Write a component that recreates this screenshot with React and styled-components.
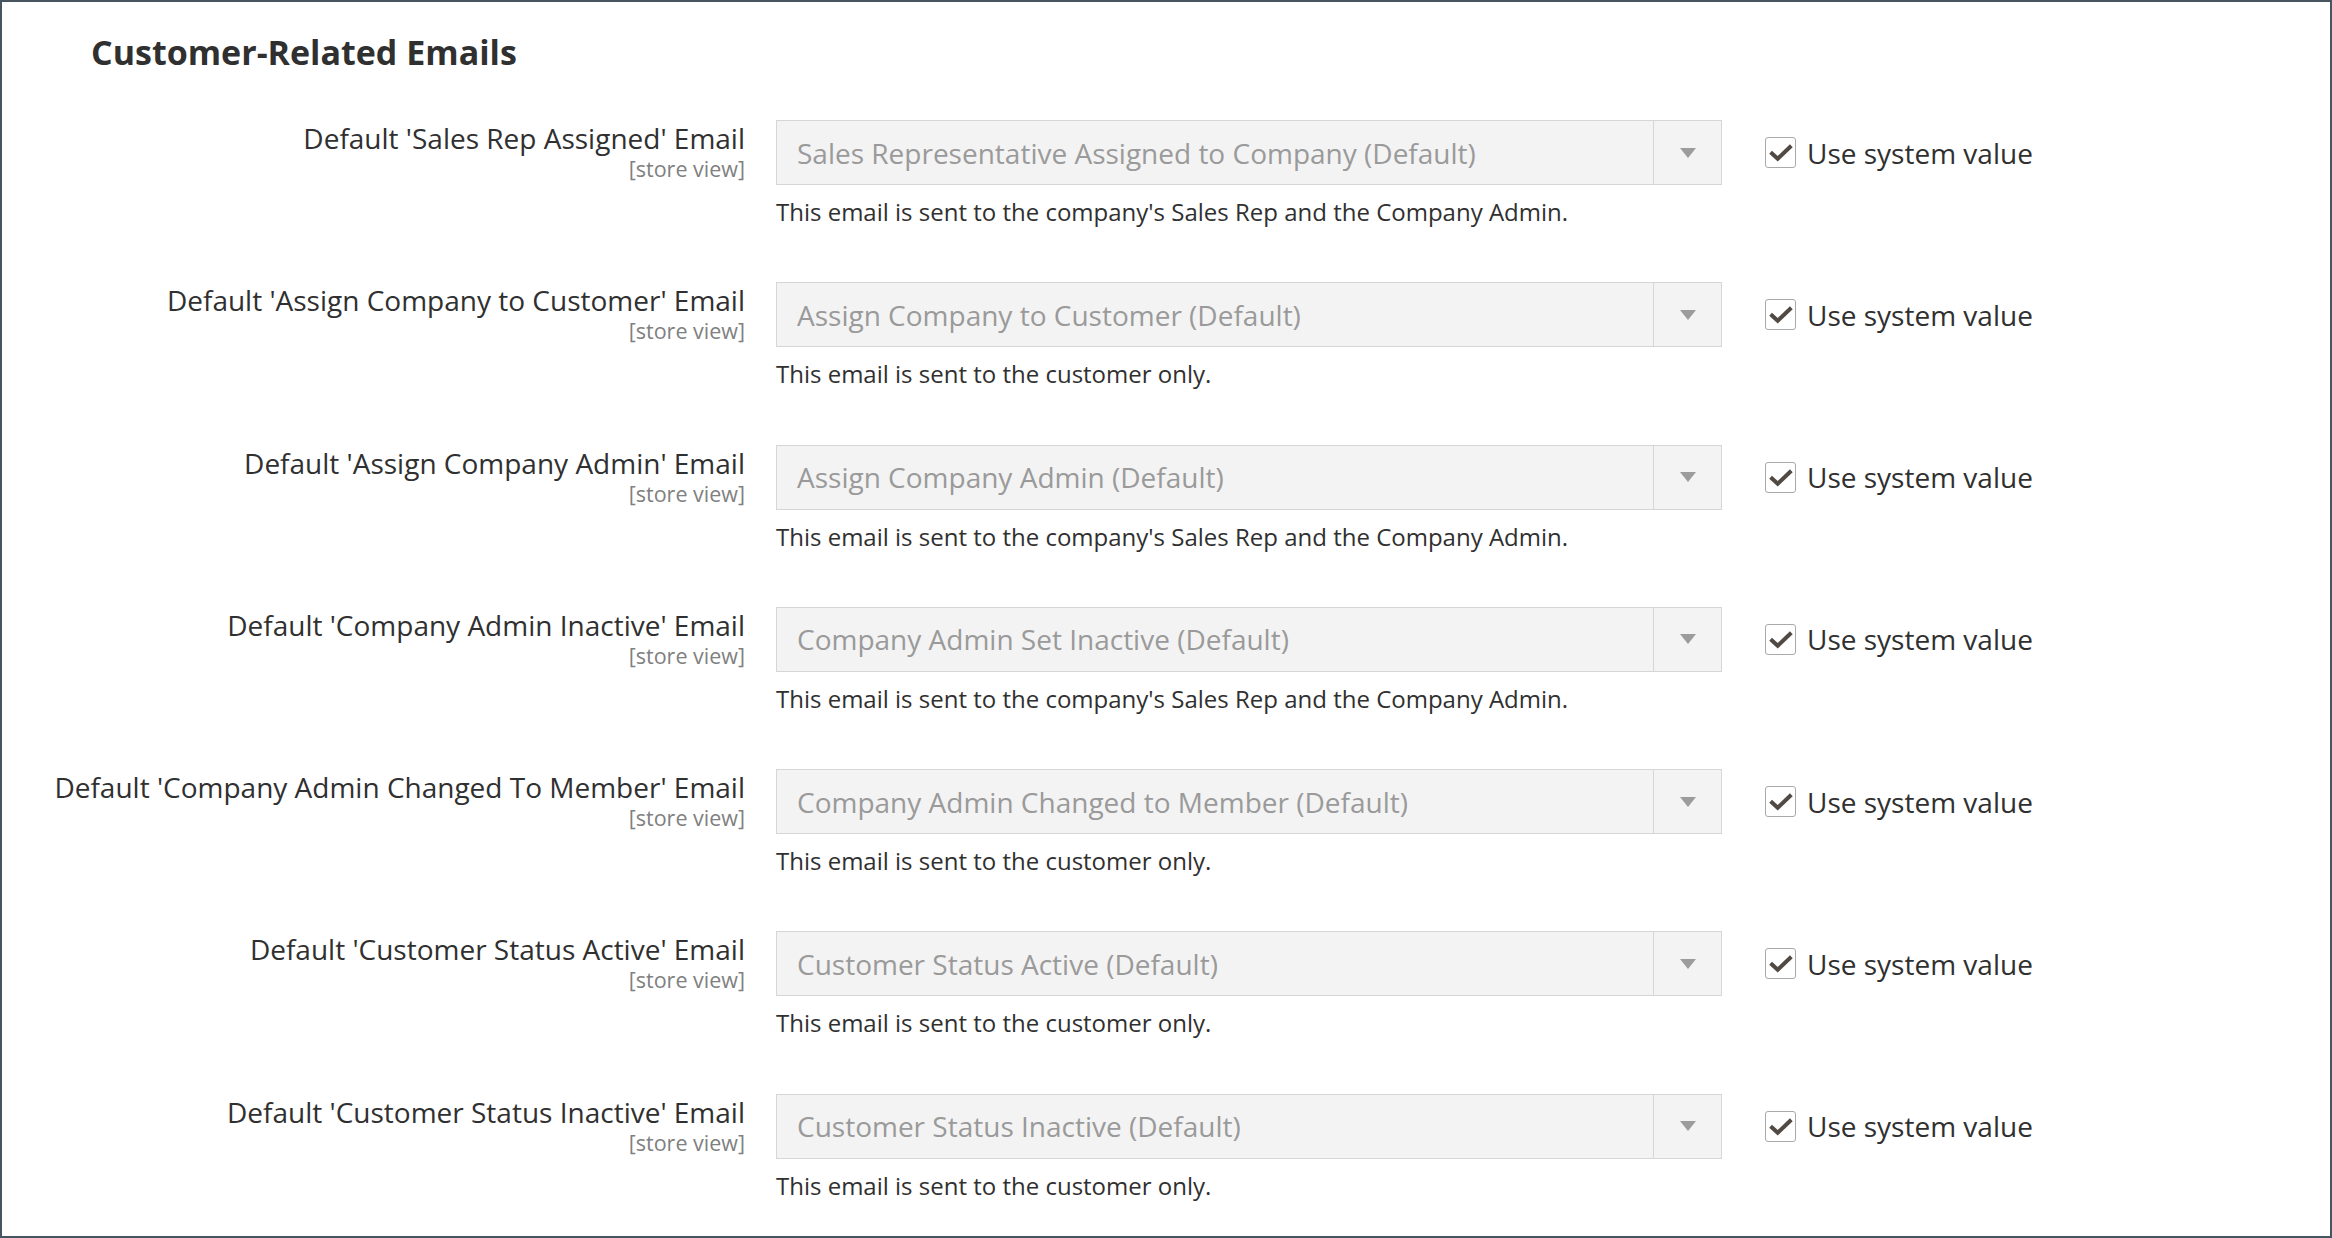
import React from "react"
import styled, {createGlobalStyle} from "styled-components"

const emails_data = [
    {label: "Default 'Sales Rep Assigned' Email", value: "Sales Representative Assigned to Company (Default)", note: "This email is sent to the company's Sales Rep and the Company Admin."},
    {label: "Default 'Assign Company to Customer' Email", value: "Assign Company to Customer (Default)", note: "This email is sent to the customer only."},
    {label: "Default 'Assign Company Admin' Email", value: "Assign Company Admin (Default)", note: "This email is sent to the company's Sales Rep and the Company Admin."},
    {label: "Default 'Company Admin Inactive' Email", value: "Company Admin Set Inactive (Default)", note: "This email is sent to the company's Sales Rep and the Company Admin."},
    {label: "Default 'Company Admin Changed To Member' Email", value: "Company Admin Changed to Member (Default)", note: "This email is sent to the customer only."},
    {label: "Default 'Customer Status Active' Email", value: "Customer Status Active (Default)", note: "This email is sent to the customer only."},
    {label: "Default 'Customer Status Inactive' Email", value: "Customer Status Inactive (Default)", note: "This email is sent to the customer only."},
]

const CheckIcon = () => (                                                                                               // drawn in the box's own 31px space so the points line up with the screenshot
    <svg width="29" height="29" viewBox="1 1 29 29">
        <path d="M5.6 15.2 L12.7 21.8 L26.3 8.8" fill="none" stroke="#514943" strokeWidth="4" strokeLinecap="butt" strokeLinejoin="miter" />
    </svg>
)

const EmailRow = ({label, value, note}) => (
    <Row>
        <LabelBox>
            <LabelText>{label}</LabelText>
            <Scope>[store view]</Scope>
        </LabelBox>
        <Select>
            <SelectText>{value}</SelectText>
            <ArrowBox><Arrow/></ArrowBox>
        </Select>
        <SystemValue>
            <Checkbox><CheckIcon/></Checkbox>
            <SystemText>Use system value</SystemText>
        </SystemValue>
        <Note>{note}</Note>
    </Row>
)

const App = () => {                                                                                                     // config section with the customer related email templates
    return (
        <>
            <GlobalStyle/>
            <Frame>
                <Title>Customer-Related Emails</Title>
                <Rows>
                    {emails_data.map(d => <EmailRow key={d.label} {...d}/>)}
                </Rows>
            </Frame>
        </>
    )
}

export default App


//-----------------------------------------------STYLES-----------------------------------------------//

const GlobalStyle = createGlobalStyle`
    html, body {
        margin: 0;
        padding: 0;
        background: #ffffff;
        font-family: "Open Sans", "DejaVu Sans", sans-serif;
        color: #303030;
    }
`

const Frame = styled.div`
    width: 2332px;
    height: 1238px;
    box-sizing: border-box;
    border: 2px solid #46555f;
    background: #ffffff;
    overflow: hidden;
`

const Title = styled.h2`
    margin: 0;
    padding: 30px 0 0 89px;
    font-size: 34px;
    line-height: 40px;
    font-weight: 700;
    color: #303030;
`

const Rows = styled.div`
    display: flex;
    flex-direction: column;
    gap: 54.3px;
    margin-top: 48px;
`

const Row = styled.div`
    display: grid;
    grid-template-columns: 700px 946px auto;
    column-gap: 31px;
    padding-left: 43px;
    align-items: start;
`

const LabelBox = styled.div`
    text-align: right;
    padding-top: 1px;
`

const LabelText = styled.div`
    font-size: 28px;
    line-height: 34px;
    color: #303030;
    white-space: nowrap;
`

const Scope = styled.div`
    font-size: 21.5px;
    line-height: 28px;
    color: #808080;
`

const Select = styled.div`
    height: 65px;
    box-sizing: border-box;
    border: 1px solid #d6d6d6;
    background: #f3f3f3;
    display: flex;
    align-items: center;
`

const SelectText = styled.div`
    flex: 1;
    padding-left: 20px;
    font-size: 28px;
    color: #9a9a9a;
    white-space: nowrap;
`

const ArrowBox = styled.div`
    width: 67px;
    height: 100%;
    border-left: 1px solid #d6d6d6;
    display: flex;
    align-items: center;
    justify-content: center;
`

const Arrow = styled.span`
    width: 0;
    height: 0;
    border-left: 8px solid transparent;
    border-right: 8px solid transparent;
    border-top: 10px solid #9c9c9c;
`

const SystemValue = styled.label`
    height: 65px;
    margin-left: 12px;
    display: flex;
    align-items: center;
    gap: 11px;
`

const Checkbox = styled.span`
    width: 31px;
    height: 31px;
    box-sizing: border-box;
    border: 1px solid #a9a9a9;
    border-radius: 3px;
    background: #ffffff;
    display: flex;
    align-items: center;
    justify-content: center;
`

const SystemText = styled.span`
    font-size: 28px;
    color: #303030;
`

const Note = styled.div`
    grid-column: 2;
    margin-top: 11px;
    font-size: 24px;
    line-height: 32px;
    color: #303030;
`
